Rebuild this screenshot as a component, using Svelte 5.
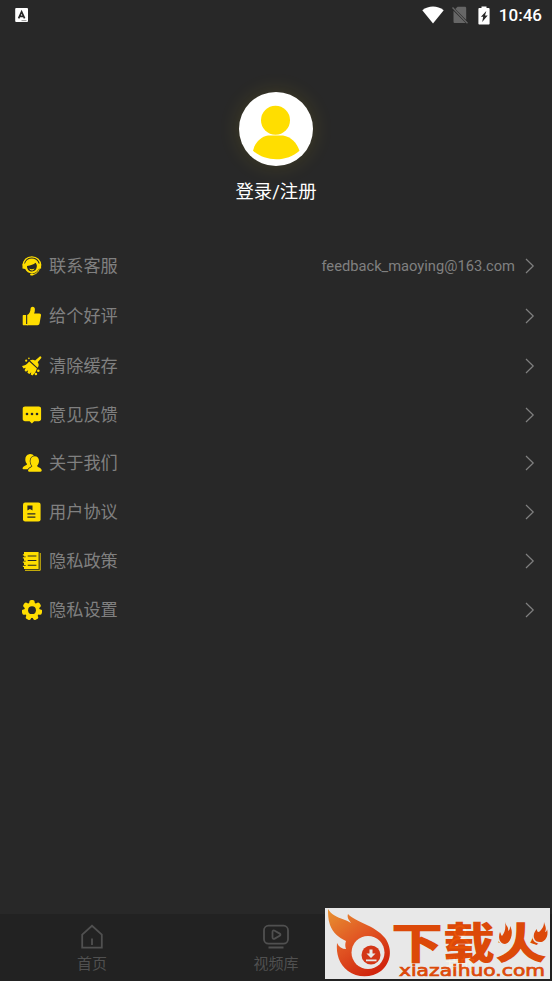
<script lang="ts">
	type MenuItem = { icon: string; label: string; value?: string };

	const menu: MenuItem[] = [
		{ icon: 'service', label: '联系客服', value: 'feedback_maoying@163.com' },
		{ icon: 'like', label: '给个好评' },
		{ icon: 'clean', label: '清除缓存' },
		{ icon: 'message', label: '意见反馈' },
		{ icon: 'about', label: '关于我们' },
		{ icon: 'agreement', label: '用户协议' },
		{ icon: 'policy', label: '隐私政策' },
		{ icon: 'settings', label: '隐私设置' }
	];

	const tabs = [
		{ id: 'home', label: '首页' },
		{ id: 'library', label: '视频库' },
		{ id: 'mine', label: '我的' }
	];

	const gearTeeth = Array.from({ length: 7 }, (_, i) => (i * 360) / 7);

	let activeTab = $state('mine');
</script>

{#snippet menuIcon(name: string)}
	<svg class="menu-icon" viewBox="0 0 20 20" aria-hidden="true">
		{#if name === 'service'}
			<path d="M1.2 9.5C1.2 4.3 4.8.8 9.8.8s8.9 3.500 8.900 8.700" fill="none" stroke="currentColor" stroke-width="1.3" />
			<path d="M3 7.400C4 4.200 6.700 2.500 9.800 2.500s5.800 1.700 6.800 4.900l2.500.3v4.800l-2.600.4c-1 2.600-3.500 4.300-6.500 4.300s-5.800-1.700-6.800-4.300L.5 12.500V7.700z" />
			<path class="cut" d="M5 9.900c3.900-.3 6.600-1.300 8.500-3.100.8 1 1.300 1.900 1.400 3.300-.1 3.300-2 5.300-5 5.300-2.900 0-4.900-2.100-4.900-5.500z" />
			<path d="M7.100 12.500c1.800 1 3.700 1 5.400 0-.6 1.400-1.500 2-2.700 2s-2.100-.7-2.700-2z" />
			<path d="M17.300 12.700c-.7 3.200-3.100 5.300-6.500 5.900" fill="none" stroke="currentColor" />
			<rect x="8.1" y="17.4" width="3.5" height="2.200" rx="1.1" />
		{:else if name === 'like'}
			<path d="M1.7 9.1h2.400v10.100H1.700c-.6 0-1-.4-1-1v-8.100c0-.6.4-1 1-1zM5.200 9.100c2.300-1.300 3.200-3.300 3.400-6.500.1-1.200 1-1.900 2-1.900 1.500 0 2.300 1.100 2.300 2.700 0 1.500-.3 2.800-.8 4.100h5.200c1.200 0 1.900.9 1.700 2l-1.500 8c-.2 1-1 1.700-2 1.700H5.200z" />
			<path d="M4 18h2v1.200H4z" />
		{:else if name === 'clean'}
			<path d="M17.800.4c.8-.4 1.900.6 1.500 1.500l-3.600 4.400c1.500 1.800 1.200 3.900-.1 5.500L7.900 4.600c1.700-1.200 3.600-1.200 5.200-.1z" />
			<path d="M7.200 5.500l7.700 7.100c-.8 3-2.200 5.300-4.500 7l-1.700-1.100.6-2.200-2 1.700-1.900-1.300.8-2.400-2.300 1.400-1.400-1.500 1.300-2.400-2.300.6L0 10c2.800-.2 5.200-1.700 7.200-4.500z" />
			<circle cx="4.2" cy="4.7" r="1.1" />
			<circle cx="6.9" cy="2.4" r=".8" />
			<circle cx="16.3" cy="14.8" r="1.300" />
			<circle cx="13.900" cy="18" r="1.3" />
		{:else if name === 'message'}
			<path d="M3 1.500h13.800c1.300 0 2.300.9 2.300 2.200v10.300c0 1.300-1 2.200-2.300 2.200h-4.600L9.900 18.600l-2.300-2.400H3c-1.300 0-2.300-.9-2.300-2.200V3.700c0-1.300 1-2.200 2.300-2.200z" />
			<g class="cut">
				<circle cx="5" cy="9" r="1.300" />
				<circle cx="10" cy="9" r="1.3" />
				<circle cx="15" cy="9" r="1.3" />
			</g>
		{:else if name === 'about'}
			<path d="M7.200 1.200c2.200-.4 4.200.5 4.800 2.100l1 9-5 4H1.500c-1.500 0-1-2.100.2-2.800 1.600-1 3.300-1.200 3.400-2.500-.9-.8-1.800-2.400-1.800-4.600 0-2.700 1.400-4.800 3.900-5.200z" />
			<path class="front" d="M12.700 3.300c2.600 0 4.300 1.800 4.300 4.800 0 1.900-.7 3.500-1.900 4.700 0 1.700 4.100 1.500 4.600 4.500.1.800-.4 1.400-1.200 1.400H7.100c-.8 0-1.200-.6-1-1.400.6-2.900 4.200-2.700 4.200-4.400-1.200-1.100-1.900-2.700-1.900-4.600 0-3.100 1.700-5 4.300-5z" />
		{:else if name === 'agreement'}
			<rect x="1" y=".6" width="17.600" height="18.800" rx="2.2" />
			<path class="cut" d="M5.400 3.500h5.100v5L7.950 7 5.400 8.500zM5.400 11.300h8v1.300h-8zM5.400 14.500h8v1.300h-8z" />
		{:else if name === 'policy'}
			<path d="M2 1h14.600v17.100H2v-2H.9v-1.300H2v-3H.9v-1.300H2v-3H.9V6.200H2V4.500H.9V3.200H2z" />
			<path d="M18.200 2v17.300H3" fill="none" stroke="currentColor" stroke-width=".9" />
			<path class="cut" d="M5.700 4.400h8.700v1.100H5.700zM5.700 9h8.700v1.100H5.700zM5.700 13.700h8.700v1.100H5.700zM2 5.400h1.700v.8H2zM2 9.700h1.700v.8H2zM2 14h1.700v.8H2z" />
		{:else}
			<circle cx="10" cy="10.200" r="7.700" />
			{#each gearTeeth as angle}
				<rect x="7.300" y="0" width="5.400" height="6" rx="2" transform="rotate({angle} 10 10.200)" />
			{/each}
			<circle class="cut" cx="10" cy="10.200" r="3.900" />
		{/if}
	</svg>
{/snippet}

<div class="screen">
	<header class="status-bar">
		<svg class="status-app" viewBox="0 0 14 15">
			<rect x=".2" y="0" width="12.8" height="14" rx="1" fill="#fff" />
			<path d="M3.600 10.300l3-6.600 3 6.600M4.700 8.300h3.800" fill="none" stroke="#282828" stroke-width="1.700" />
			<path d="M6.500 12.600h5" stroke="#999" />
		</svg>
		<div class="status-right">
			<svg class="wifi" viewBox="0 0 22 18">
				<path d="M.3 4.200C6.600-.8 15.400-.8 21.700 4.200L11 17.500z" fill="#fff" />
			</svg>
			<svg class="sim" viewBox="0 0 16 18">
				<path d="M5.500.8h7.200c1 0 1.500.5 1.500 1.500v11.700L3.300 3zM1.500 4.800L13.700 17H3c-1 0-1.500-.5-1.500-1.500z" fill="#666" />
				<path d="M.5 1.500L15.500 17.300" stroke="#666" stroke-width="1.300" />
			</svg>
			<svg class="battery" viewBox="0 0 12 19">
				<path d="M3.500.4h5v1.600h2c.7 0 1.100.4 1.100 1.100v14.300c0 .7-.4 1.100-1.100 1.100h-9c-.7 0-1.100-.4-1.100-1.100V3.100C.4 2.400.8 2 1.500 2h2z" fill="#fff" />
				<path d="M8.300 5L2.900 10.800h2.300L4.200 16l5.500-6.600H7z" fill="#282828" />
			</svg>
			<span class="time">10:46</span>
		</div>
	</header>

	<section class="profile">
		<div class="avatar">
			<svg viewBox="0 0 74 74">
				<circle cx="36.500" cy="28.300" r="14.500" />
				<path d="M29 43.500h15c8 1.300 13.500 6.700 16.500 15.200C54 64.300 46 67.300 37.300 67.300S20 64.300 14 58.700c2-8.500 8-14 15-15.200z" />
			</svg>
		</div>
		<button class="login" type="button">登录/注册</button>
	</section>

	<nav class="menu">
		{#each menu as item}
			<button class="menu-row" type="button">
				{@render menuIcon(item.icon)}
				<span class="menu-label">{item.label}</span>
				{#if item.value}
					<span class="menu-value">{item.value}</span>
				{/if}
				<svg class="chevron" viewBox="0 0 10 16">
					<path d="M1 1l7.200 7L1 15" />
				</svg>
			</button>
		{/each}
	</nav>

	<footer class="tab-bar">
		{#each tabs as tab}
			<button class="tab" class:active={activeTab === tab.id} type="button" onclick={() => (activeTab = tab.id)}>
				<svg viewBox="0 0 28 26">
					{#if tab.id === 'home'}
						<path d="M4.200 10.700L14 1.800l9.800 8.900v13H4.200zM14 14.500v6.500" />
					{:else if tab.id === 'library'}
						<rect x="2" y="1.700" width="24" height="18" rx="4.500" />
						<path d="M10.500 8c0-1.400 1-2 2.200-1.300l5 2.900c1 .6 1 1.500 0 2.100l-5 2.900c-1.200.7-2.200.1-2.200-1.300zM6.500 23.500h15" />
					{:else}
						<circle cx="14" cy="7.500" r="5.500" />
						<path d="M4 23.500c1-6 5-9 10-9s9 3 10 9z" />
					{/if}
				</svg>
				<span>{tab.label}</span>
			</button>
		{/each}
	</footer>

	<svg class="watermark" viewBox="0 0 225 71">
		<defs>
			<linearGradient id="flame" x1="0" y1="0" x2=".65" y2="1">
				<stop offset="0" stop-color="#f59a32" />
				<stop offset=".5" stop-color="#ee5c25" />
				<stop offset="1" stop-color="#dc260c" />
			</linearGradient>
		</defs>
		<rect width="225" height="71" fill="#f5f5f5" />
		<path d="M3 1c3 5 8 8 17 11 3 1 4 2 6 3-3-4-4-6-3-9 7 8 27 11 37 24 8 11 6 25-4 33-9 7-24 7-33 0C14 56 11 46 12 35c2 4 5 6 9 6-1-3-1-5 0-8C13 29 8 25 5 17 3 11 3 6 3 1z" fill="url(#flame)" />
		<circle cx="43" cy="44.500" r="16.500" fill="#f5f5f5" />
		<circle cx="46" cy="47" r="9.500" fill="#df3817" />
		<path d="M44.500 41.500h3v4h3L46 50l-4.500-4.500h3zM41 51.500h10.500v1.700H41z" fill="#f5f5f5" />
		<text class="brand" x="66" y="50.500" textLength="156" lengthAdjust="spacingAndGlyphs">下载火</text>
		<path class="spark" d="M180 14c1 4 4 5 3 9 2-1 2-3 2-5 4 6 1 17-5 18-6-1-7-7-5-12 1 2 1 3 2 4 3-4 4-8 3-14zM219 14c1 4 3 6 1 10 1 0 2-1 2-3 2 7-2 13-7 13-3 0-5-1-6-4-1-4 1-7 3-9 0 2 0 3 2 3 3-3 5-5 5-10z" />
		<text class="domain" x="74" y="68" textLength="146" lengthAdjust="spacingAndGlyphs">xiazaihuo.com</text>
	</svg>
</div>

<style>
	:global(body) {
		background: #282828;
	}

	.screen {
		position: relative;
		display: flex;
		flex-direction: column;
		height: 981px;
		overflow: hidden;
		background: #282828;
		font-family: Roboto, 'Noto Sans CJK SC', sans-serif;
	}

	button {
		padding: 0;
		border: 0;
		background: none;
		color: inherit;
		font: inherit;
		cursor: pointer;
	}

	.status-bar {
		display: flex;
		align-items: center;
		justify-content: space-between;
		height: 30px;
		padding: 0 10px 0 15px;
	}

	.status-app {
		width: 14px;
		height: 15px;
	}

	.status-right {
		display: flex;
		align-items: center;
		color: #fff;
	}

	.wifi {
		width: 22px;
		height: 18px;
		margin-right: 8px;
	}

	.sim {
		width: 16px;
		height: 18px;
		margin-right: 10px;
	}

	.battery {
		width: 12px;
		height: 19px;
		margin-right: 9px;
	}

	.time {
		font-size: 17px;
		font-weight: 500;
		line-height: 30px;
	}

	.profile {
		display: flex;
		flex-direction: column;
		align-items: center;
		height: 211px;
		padding-top: 62px;
		box-sizing: border-box;
	}

	.avatar {
		width: 74px;
		height: 74px;
		border-radius: 50%;
		background: #fff;
		box-shadow: 0 0 22px rgba(255, 222, 0, 0.12);
	}

	.avatar svg {
		display: block;
		fill: #ffde00;
	}

	.login {
		margin-top: 12px;
		color: #fff;
		font-size: 18.4px;
		line-height: 28px;
	}

	.menu {
		display: flex;
		flex-direction: column;
	}

	.menu-row {
		display: flex;
		align-items: center;
		height: 49px;
		padding: 0 17px 0 22px;
		color: #808080;
		text-align: left;
	}

	.menu-row:nth-child(-n + 2) {
		height: 50px;
	}

	.menu-row:nth-child(5) {
		height: 48px;
	}

	.menu-icon {
		width: 20px;
		height: 20px;
		margin-right: 7px;
		color: #ffde00;
		fill: currentColor;
	}

	.cut {
		fill: #282828;
	}

	.front {
		stroke: #282828;
		stroke-width: 1.4;
		paint-order: stroke;
	}

	.menu-label {
		font-size: 17.2px;
		line-height: 26px;
	}

	.menu-value {
		margin-left: auto;
		font-size: 14.7px;
	}

	.chevron {
		width: 10px;
		height: 16px;
		margin-left: auto;
		fill: none;
		stroke: #808080;
		stroke-width: 1.2;
	}

	.menu-value + .chevron {
		margin-left: 10px;
	}

	.tab-bar {
		display: grid;
		grid-template-columns: repeat(3, 1fr);
		height: 67px;
		margin-top: auto;
		background: #222;
	}

	.tab {
		display: flex;
		flex-direction: column;
		align-items: center;
		padding-top: 10px;
		color: #505050;
		font-size: 15px;
		line-height: 22px;
	}

	.tab svg {
		width: 28px;
		height: 26px;
		margin-bottom: 3px;
		fill: none;
		stroke: currentColor;
		stroke-width: 1.8;
	}

	.tab.active {
		color: #ffde00;
	}

	.watermark {
		position: absolute;
		top: 908px;
		left: 325px;
		width: 225px;
		height: 71px;
		opacity: 0.94;
	}

	.brand {
		fill: #e84c08;
		font-family: 'Noto Sans CJK SC', sans-serif;
		font-size: 43px;
		font-weight: 900;
	}

	.spark {
		fill: #e84c08;
		stroke: #f5f5f5;
		stroke-width: 3;
		paint-order: stroke;
	}

	.domain {
		fill: #e84c08;
		stroke: #e84c08;
		stroke-width: 0.7;
		font-family: 'DejaVu Sans', sans-serif;
		font-size: 16px;
	}
</style>
